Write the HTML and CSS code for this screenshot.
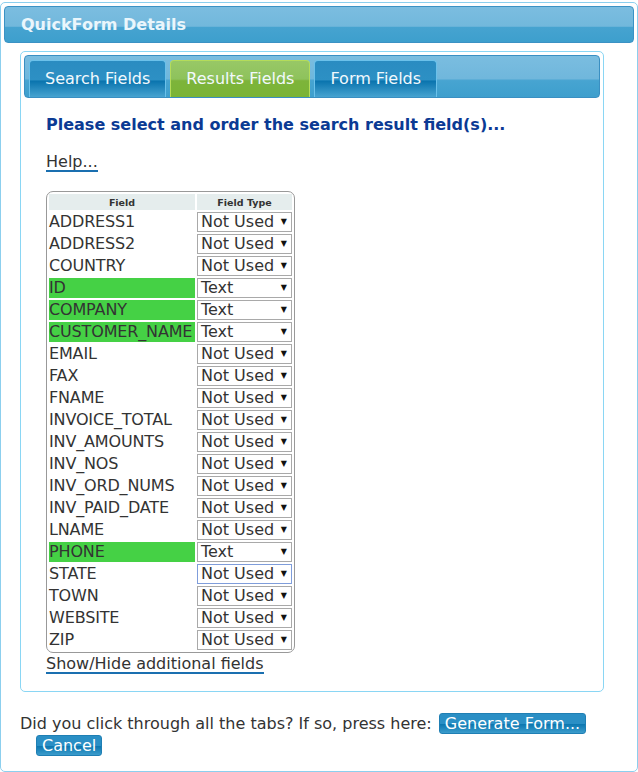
FILE: index.html
```html
<!DOCTYPE html>
<html lang="en">
<head>
  <meta charset="UTF-8" />
  <title>QuickForm Details</title>
  <link rel="stylesheet" href="styles.css">
</head>
<body>

  <div class="dialog">
    <div class="dialog-title">QuickForm Details</div>

    <div class="panel">
      <div class="tabbar">
        <a class="tab">Search Fields</a>
        <a class="tab active">Results Fields</a>
        <a class="tab">Form Fields</a>
      </div>

      <div class="panel-body">
        <h2>Please select and order the search result field(s)...</h2>

        <a class="link help" href="#">Help...</a>

        <table class="fields">
          <thead>
            <tr>
              <th class="col-name">Field</th>
              <th>Field Type</th>
            </tr>
          </thead>
          <tbody id="fields-body">
            <!-- rows built by script -->
          </tbody>
        </table>

        <a class="link" href="#">Show/Hide additional fields</a>
      </div>
    </div>

    <div class="footer">
      Did you click through all the tabs? If so, press here:
      <button class="btn">Generate Form...</button>
      <br>
      <button class="btn cancel">Cancel</button>
    </div>
  </div>

  <script>
    const campi = [
      ['ADDRESS1', 'Not Used'],
      ['ADDRESS2', 'Not Used'],
      ['COUNTRY', 'Not Used'],
      ['ID', 'Text'],
      ['COMPANY', 'Text'],
      ['CUSTOMER_NAME', 'Text'],
      ['EMAIL', 'Not Used'],
      ['FAX', 'Not Used'],
      ['FNAME', 'Not Used'],
      ['INVOICE_TOTAL', 'Not Used'],
      ['INV_AMOUNTS', 'Not Used'],
      ['INV_NOS', 'Not Used'],
      ['INV_ORD_NUMS', 'Not Used'],
      ['INV_PAID_DATE', 'Not Used'],
      ['LNAME', 'Not Used'],
      ['PHONE', 'Text'],
      ['STATE', 'Not Used'],
      ['TOWN', 'Not Used'],
      ['WEBSITE', 'Not Used'],
      ['ZIP', 'Not Used']
    ];

    document.getElementById('fields-body').innerHTML = campi.map(([nome, tipo]) => `
      <tr>
        <td class="name${tipo === 'Text' ? ' used' : ''}">${nome}</td>
        <td>
          <div class="select${nome === 'STATE' ? ' focus' : ''}">
            <span>${tipo}</span><span class="arrow">&#9660;</span>
          </div>
        </td>
      </tr>
    `).join('');
  </script>

</body>
</html>
```

FILE: styles.css
```css
body {
  margin: 0;
  background: #ffffff;
  font-family: 'DejaVu Sans', Verdana, sans-serif;
  color: #333;
}

.dialog {
  width: 638px;
  height: 770px;
  margin-top: 2px;
  border: 1px solid #8ccfee;
  border-radius: 5px;
  padding: 3px;
  box-sizing: border-box;
}

.dialog-title {
  height: 37px;
  border: 1px solid #3b92c4;
  border-radius: 4px;
  background: linear-gradient(to bottom, #7bbde0 0%, #72b8dc 55%, #46a3d0 58%, #3d9fcd 100%);
  color: #eaf6fc;
  font-weight: bold;
  font-size: 16px;
  line-height: 35px;
  padding-left: 16px;
  box-sizing: border-box;
}

.panel {
  margin: 8px 30px 0 16px;
  height: 641px;
  border: 1px solid #8ad6f4;
  border-radius: 5px;
  padding: 3px;
  box-sizing: border-box;
}

.tabbar {
  height: 43px;
  border: 1px solid #3a8fc2;
  border-radius: 4px;
  background: linear-gradient(to bottom, #7abde0 0%, #70b7dc 55%, #47a4d1 60%, #3e9fcd 100%);
  display: flex;
  align-items: flex-end;
  gap: 4px;
  padding-left: 4px;
  box-sizing: border-box;
}

.tab {
  height: 37px;
  padding: 0 15px;
  border: 1px solid #6bc1ea;
  border-bottom: none;
  border-radius: 4px 4px 0 0;
  background: linear-gradient(to bottom, #2a8cc1 0%, #2d90c4 52%, #0a74ae 56%, #47a3d0 100%);
  color: #f2f9fd;
  font-size: 16px;
  line-height: 35px;
  box-sizing: border-box;
}

.tab.active {
  border-color: #b4dc5a;
  background: linear-gradient(to bottom, #98c866 0%, #8ec25c 50%, #7db43a 55%, #7ab436 100%);
}

.panel-body {
  padding: 17px 22px 0 22px;
}

h2 {
  margin: 0 0 17px;
  font-size: 16px;
  line-height: 20px;
  color: #0b3a94;
}

.link {
  color: #333;
  font-size: 16px;
  text-decoration: none;
  border-bottom: 2px solid #1a6fb0;
}

.help {
  display: inline-block;
  line-height: 17px;
  margin-bottom: 19px;
}

.fields {
  border: 1px solid #999;
  border-radius: 7px;
  border-spacing: 2px 2px;
  border-collapse: separate;
  font-size: 16px;
}

.fields th {
  background: #e5eded;
  font-size: 9.5px;
  font-weight: bold;
  height: 16px;
  padding: 0;
  color: #333;
}

.fields th.col-name {
  width: 146px;
}

.fields td {
  padding: 0;
  height: 20px;
  line-height: 20px;
}

.fields td.name {
  white-space: nowrap;
  letter-spacing: -0.15px;
}

.fields td.used {
  background: #45d145;
}

.select {
  width: 95px;
  height: 20px;
  border: 1px solid #a9a9a9;
  background: white;
  box-sizing: border-box;
  display: flex;
  justify-content: space-between;
  align-items: center;
  padding: 0 4px 0 3px;
  line-height: 18px;
}

.select.focus {
  border-color: #7f9ddb;
}

.arrow {
  font-size: 8px;
  color: #111;
}

.fields + .link {
  display: inline-block;
  line-height: 17px;
  margin-top: 2px;
}

.footer {
  padding: 21px 0 0 16px;
  font-size: 16px;
  line-height: 22px;
}

.btn {
  font-family: inherit;
  font-size: 16px;
  color: white;
  border: 1px solid #1f7fb4;
  border-radius: 3px;
  padding: 0 5px;
  margin-left: 2px;
  height: 21px;
  line-height: 19px;
  background: linear-gradient(to bottom, #2a8fc5 0%, #2a8fc5 50%, #0d77b0 55%, #3b9ccc 100%);
}

.cancel {
  margin-left: 16px;
}
```
